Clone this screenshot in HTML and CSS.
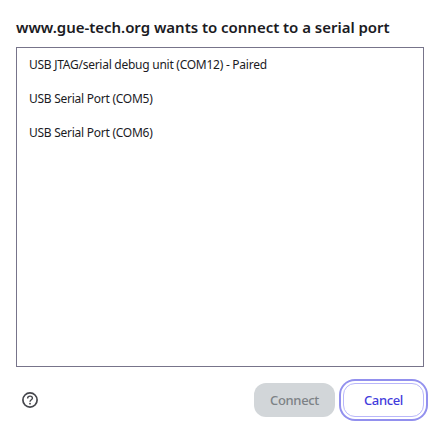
FILE: index.html
```
<!DOCTYPE html>
<html lang="en">

<head>
    <meta charset="UTF-8">
    <meta name="viewport" content="width=device-width, initial-scale=1.0">
    <title>Serial port</title>
    <link rel="stylesheet" href="styles.css">
</head>

<body>
    <div class="dialog">
        <h1>www.gue-tech.org wants to connect to a serial port</h1>
        <ul class="port-list">
            <li>USB JTAG/serial debug unit (COM12) - Paired</li>
            <li>USB Serial Port (COM5)</li>
            <li>USB Serial Port (COM6)</li>
        </ul>
        <div class="footer">
            <svg class="help" width="16" height="16" viewBox="0 0 16 16" fill="none" stroke="#45464c">
                <circle cx="8" cy="8" r="7.1" stroke-width="1.7" />
                <path d="M5.6 6.4C5.6 4.9 6.6 4.1 8 4.1S10.4 5 10.4 6.2C10.4 7.7 8 7.9 8 9.8" stroke-width="1.4" />
                <circle cx="8" cy="11.7" r=".9" fill="#45464c" stroke="none" />
            </svg>
            <button class="btn connect" disabled>Connect</button>
            <button class="btn cancel">Cancel</button>
        </div>
    </div>
</body>

</html>
```

FILE: styles.css
```
body {
    margin: 0;
    background-color: #fff;
    color: #1b1b1f;
    font-family: "Noto Sans", "Open Sans", sans-serif;
}

.dialog {
    box-sizing: border-box;
    width: 439px;
    height: 433px;
    padding: 17px 15px 0 16px;
}

h1 {
    margin: 0 0 10px;
    font-size: 15px;
    font-weight: 600;
    line-height: 20px;
    letter-spacing: -0.03px;
    white-space: nowrap;
}

.port-list {
    box-sizing: border-box;
    width: 408px;
    height: 320px;
    margin: 0;
    padding: 0 12px;
    border: 1px solid #77748a;
    list-style: none;
    font-size: 12px;
    letter-spacing: -0.26px;
}

.port-list li {
    height: 34px;
    line-height: 34px;
    white-space: nowrap;
}

.footer {
    display: flex;
    align-items: center;
    width: 408px;
    margin-top: 16px;
}

.help {
    margin-left: 6px;
    margin-right: auto;
}

.btn {
    box-sizing: border-box;
    width: 81px;
    height: 34px;
    padding: 0;
    border: none;
    border-radius: 12px;
    font-family: inherit;
    font-size: 13px;
    font-weight: 500;
    letter-spacing: -0.35px;
}

.connect {
    background-color: #d2d6d9;
    color: #7d8286;
}

.cancel {
    margin-left: 8px;
    border: 1px solid #b9b7fa;
    background-color: #fff;
    color: #433cdc;
    /* focus ring */
    box-shadow: 0 0 0 2px #fff, 0 0 0 4px #9290ee;
}
```
